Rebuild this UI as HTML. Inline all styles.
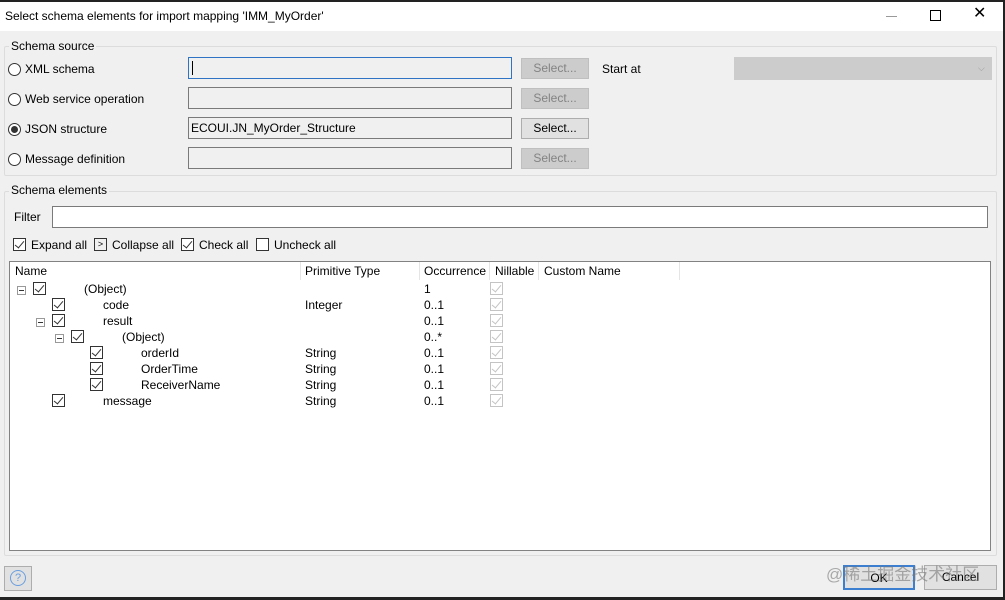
<!DOCTYPE html>
<html><head><meta charset="utf-8"><style>
*{box-sizing:border-box;margin:0;padding:0}
body{width:1005px;height:600px;overflow:hidden;background:#222;font-family:"Segoe UI","Liberation Sans",sans-serif;font-size:12px;color:#000;position:relative}
.win{position:absolute;left:0;top:2px;width:1003px;height:595px;background:#f0f0f0}
.a{position:absolute}
.title{left:0;top:0;width:1003px;height:29px;background:#fff}
.t{position:absolute;white-space:nowrap;font-size:12px;line-height:14px}
.grp{position:absolute;border:1px solid #dcdcdc;border-radius:2px}
.inp{position:absolute;height:22px;border:1px solid #7a7a7a;background:#f0f0f0}
.btn{position:absolute;height:21px;border:1px solid #adadad;background:#e1e1e1;text-align:center;line-height:19px;font-size:12px}
.dis{background:#ccc;border-color:#bfbfbf;color:#838383}
.rad{position:absolute;width:13px;height:13px;border:1px solid #333;border-radius:50%;background:#fff}
.cb{position:absolute;width:13px;height:13px;border:1px solid #333;background:#fff}
.cb::after{content:"";position:absolute;left:3px;top:0px;width:4px;height:8px;border:solid #333;border-width:0 1px 1px 0;transform:rotate(40deg)}
.cbg{border-color:#c4c4c4}.cbg::after{border-color:#c4c4c4}
.pm{position:absolute;width:9px;height:9px;border:1px solid #999;background:#fff}
.pm::after{content:"";position:absolute;left:1px;top:3px;width:5px;height:1px;background:#333}
</style></head><body>
<div class="win">
 <div class="a title"></div>
 <div class="t" style="left:5px;top:7px">Select schema elements for import mapping 'IMM_MyOrder'</div>
 <div class="a" style="left:886px;top:14px;width:11px;height:1px;background:#999"></div>
 <div class="a" style="left:930px;top:8px;width:11px;height:11px;border:1px solid #000"></div>
 <div class="t" style="left:973px;top:5px;font-size:16px">✕</div>

 <div class="grp" style="left:4px;top:44px;width:993px;height:130px"></div>
 <div class="t" style="left:9px;top:37px;background:#f0f0f0;padding:0 2px">Schema source</div>

 <div class="rad" style="left:8px;top:61px"></div><div class="t" style="left:25px;top:60px">XML schema</div>
 <div class="rad" style="left:8px;top:91px"></div><div class="t" style="left:25px;top:90px">Web service operation</div>
 <div class="rad" style="left:8px;top:121px"></div><div class="a" style="left:11px;top:124px;width:7px;height:7px;border-radius:50%;background:#333"></div><div class="t" style="left:25px;top:120px">JSON structure</div>
 <div class="rad" style="left:8px;top:151px"></div><div class="t" style="left:25px;top:150px">Message definition</div>

 <div class="inp" style="left:188px;top:55px;width:324px;border-color:#2f74c4"></div>
 <div class="a" style="left:192px;top:59px;width:1px;height:14px;background:#000"></div>
 <div class="inp" style="left:188px;top:85px;width:324px"></div>
 <div class="inp" style="left:188px;top:115px;width:324px"></div><div class="t" style="left:191px;top:119px">ECOUI.JN_MyOrder_Structure</div>
 <div class="inp" style="left:188px;top:145px;width:324px"></div>

 <div class="btn dis" style="left:521px;top:56px;width:68px">Select...</div>
 <div class="btn dis" style="left:521px;top:86px;width:68px">Select...</div>
 <div class="btn" style="left:521px;top:116px;width:68px">Select...</div>
 <div class="btn dis" style="left:521px;top:146px;width:68px">Select...</div>

 <div class="t" style="left:602px;top:60px">Start at</div>
 <div class="a" style="left:734px;top:55px;width:258px;height:23px;background:#ccc"></div>
 <div class="t" style="left:978px;top:59px;color:#999;font-size:9px">⌵</div>

 <div class="grp" style="left:4px;top:189px;width:993px;height:365px"></div>
 <div class="t" style="left:9px;top:181px;background:#f0f0f0;padding:0 2px">Schema elements</div>
 <div class="t" style="left:14px;top:208px">Filter</div>
 <div class="inp" style="left:52px;top:204px;width:936px;background:#fff"></div>

 <div class="cb" style="left:13px;top:236px"></div><div class="t" style="left:31px;top:236px">Expand all</div>
 <div class="a" style="left:94px;top:236px;width:13px;height:13px;border:1px solid #333;font-size:9px;line-height:11px;text-align:center">&gt;</div><div class="t" style="left:112px;top:236px">Collapse all</div>
 <div class="cb" style="left:181px;top:236px"></div><div class="t" style="left:199px;top:236px">Check all</div>
 <div class="a" style="left:256px;top:236px;width:13px;height:13px;border:1px solid #333;background:#fff"></div><div class="t" style="left:274px;top:236px">Uncheck all</div>

 <div class="a" style="left:9px;top:259px;width:982px;height:290px;background:#fff;border:1px solid #828282"></div>
 <div class="t" style="left:15px;top:262px">Name</div>
 <div class="t" style="left:305px;top:262px">Primitive Type</div>
 <div class="t" style="left:424px;top:262px">Occurrence</div>
 <div class="t" style="left:495px;top:262px">Nillable</div>
 <div class="t" style="left:544px;top:262px">Custom Name</div>
 <div class="a" style="left:300px;top:260px;width:1px;height:18px;background:#e5e5e5"></div>
 <div class="a" style="left:419px;top:260px;width:1px;height:18px;background:#e5e5e5"></div>
 <div class="a" style="left:489px;top:260px;width:1px;height:18px;background:#e5e5e5"></div>
 <div class="a" style="left:538px;top:260px;width:1px;height:18px;background:#e5e5e5"></div>
 <div class="a" style="left:679px;top:260px;width:1px;height:18px;background:#e5e5e5"></div>

 <!-- rows -->
 <div class="pm" style="left:17px;top:284px"></div><div class="cb" style="left:33px;top:280px"></div><div class="t" style="left:84px;top:280px">(Object)</div><div class="t" style="left:424px;top:280px">1</div><div class="cb cbg" style="left:490px;top:280px"></div>
 <div class="cb" style="left:52px;top:296px"></div><div class="t" style="left:103px;top:296px">code</div><div class="t" style="left:305px;top:296px">Integer</div><div class="t" style="left:424px;top:296px">0..1</div><div class="cb cbg" style="left:490px;top:296px"></div>
 <div class="pm" style="left:36px;top:316px"></div><div class="cb" style="left:52px;top:312px"></div><div class="t" style="left:103px;top:312px">result</div><div class="t" style="left:424px;top:312px">0..1</div><div class="cb cbg" style="left:490px;top:312px"></div>
 <div class="pm" style="left:55px;top:332px"></div><div class="cb" style="left:71px;top:328px"></div><div class="t" style="left:122px;top:328px">(Object)</div><div class="t" style="left:424px;top:328px">0..*</div><div class="cb cbg" style="left:490px;top:328px"></div>
 <div class="cb" style="left:90px;top:344px"></div><div class="t" style="left:141px;top:344px">orderId</div><div class="t" style="left:305px;top:344px">String</div><div class="t" style="left:424px;top:344px">0..1</div><div class="cb cbg" style="left:490px;top:344px"></div>
 <div class="cb" style="left:90px;top:360px"></div><div class="t" style="left:141px;top:360px">OrderTime</div><div class="t" style="left:305px;top:360px">String</div><div class="t" style="left:424px;top:360px">0..1</div><div class="cb cbg" style="left:490px;top:360px"></div>
 <div class="cb" style="left:90px;top:376px"></div><div class="t" style="left:141px;top:376px">ReceiverName</div><div class="t" style="left:305px;top:376px">String</div><div class="t" style="left:424px;top:376px">0..1</div><div class="cb cbg" style="left:490px;top:376px"></div>
 <div class="cb" style="left:52px;top:392px"></div><div class="t" style="left:103px;top:392px">message</div><div class="t" style="left:305px;top:392px">String</div><div class="t" style="left:424px;top:392px">0..1</div><div class="cb cbg" style="left:490px;top:392px"></div>

 <div class="a" style="left:4px;top:564px;width:28px;height:25px;border:1px solid #adadad;background:#e1e1e1"></div>
 <div class="a" style="left:10px;top:568px;width:16px;height:16px;border:1px solid #6a9ee0;border-radius:50%;color:#6a9ee0;font-size:11px;text-align:center;line-height:14px">?</div>
 <div class="btn" style="left:843px;top:563px;width:72px;height:25px;line-height:23px;border:2px solid #3c7fd1">OK</div>
 <div class="btn" style="left:924px;top:563px;width:73px;height:25px;line-height:23px">Cancel</div>
 <div class="t" style="left:826px;top:563px;font-size:17px;line-height:20px;color:rgba(120,120,120,0.6);font-family:'Liberation Sans','Noto Sans CJK SC',sans-serif">@稀土掘金技术社区</div>
</div>
</body></html>
